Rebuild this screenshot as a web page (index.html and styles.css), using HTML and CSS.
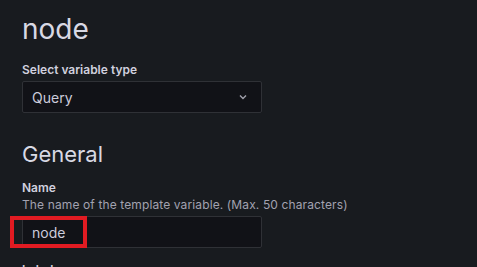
FILE: index.html
```html
<!DOCTYPE html>
<html>
<head>
<meta charset="utf-8">
<link rel="stylesheet" href="styles.css">
</head>
<body>
<main class="page">
  <h1 class="title">node</h1>
  <div class="field field-type">
    <label class="label">Select variable type</label>
    <div class="select">
      <span class="select-value">Query</span>
      <svg class="chevron" width="10" height="10" viewBox="0 0 10 10"><path d="M2 3.5 L5 6.5 L8 3.5" fill="none" stroke="#a0a0ab" stroke-width="1.4"/></svg>
    </div>
  </div>
  <h3 class="section">General</h3>
  <div class="field field-name">
    <label class="label">Name</label>
    <div class="desc">The name of the template variable. (Max. 50 characters)</div>
    <div class="input-wrap">
      <div class="input">node</div>
      <div class="highlight"></div>
    </div>
  </div>
  <div class="field">
    <label class="label">Label</label>
  </div>
</main>
</body>
</html>
```
FILE: styles.css
```css
html, body {
  margin: 0;
  padding: 0;
  background: #181b1f;
  color: #ccccdc;
  font-family: Inter, "Noto Sans", sans-serif;
  overflow: hidden;
}
.page {
  padding: 12px 0 0 22px;
}
.title {
  margin: 0 0 16px;
  font-size: 28px;
  font-weight: 400;
  line-height: 34px;
  color: #d8d9e4;
}
.field-type {
  margin-bottom: 27px;
}
.field-name {
  margin-bottom: 14px;
}
.label {
  display: block;
  font-size: 12px;
  font-weight: 600;
  line-height: 15px;
  margin-bottom: 4px;
  color: #d0d0de;
}
.select {
  width: 240px;
  height: 32px;
  box-sizing: border-box;
  background: #111217;
  border: 1px solid #2f3136;
  border-radius: 2px;
  display: flex;
  align-items: center;
  justify-content: space-between;
  padding: 0 13px 0 9px;
}
.select-value, .input {
  font-size: 14px;
  color: #ccccdc;
}
.chevron { display: block; }
.section {
  margin: 0 0 12px;
  font-size: 22px;
  font-weight: 400;
  line-height: 28px;
  color: #d8d9e4;
}
.desc {
  font-size: 12px;
  line-height: 16px;
  color: #a2a2b0;
  letter-spacing: 0.12px;
  margin-top: -2px;
  margin-bottom: 3px;
  white-space: nowrap;
}
.input-wrap {
  position: relative;
  width: 240px;
}
.input {
  height: 32px;
  box-sizing: border-box;
  background: #111217;
  border: 1px solid #2f3136;
  border-radius: 2px;
  display: flex;
  align-items: center;
  padding: 0 9px;
}
.highlight {
  position: absolute;
  left: -12px;
  top: 0;
  width: 77px;
  height: 32px;
  box-sizing: border-box;
  border: 4px solid #e11b22;
}
```
